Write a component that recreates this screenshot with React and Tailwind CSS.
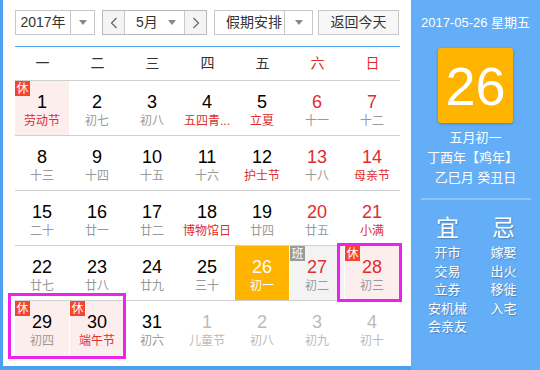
const FONT = { fontFamily: '"Liberation Sans", Arial, "Noto Sans CJK SC", sans-serif' };

const weekdays = [
  { t: "一" }, { t: "二" }, { t: "三" }, { t: "四" }, { t: "五" },
  { t: "六", red: true }, { t: "日", red: true },
];

// d: day, l: lunar, fest: red lunar text, wk: weekend, tag: 休/班, other: next month
const days = [
  { d: 1, l: "劳动节", fest: true, tag: "休" },
  { d: 2, l: "初七" },
  { d: 3, l: "初八" },
  { d: 4, l: "五四青...", fest: true },
  { d: 5, l: "立夏", fest: true },
  { d: 6, l: "十一", wk: true },
  { d: 7, l: "十二", wk: true },
  { d: 8, l: "十三" },
  { d: 9, l: "十四" },
  { d: 10, l: "十五" },
  { d: 11, l: "十六" },
  { d: 12, l: "护士节", fest: true },
  { d: 13, l: "十八", wk: true },
  { d: 14, l: "母亲节", fest: true, wk: true },
  { d: 15, l: "二十" },
  { d: 16, l: "廿一" },
  { d: 17, l: "廿二" },
  { d: 18, l: "博物馆日", fest: true },
  { d: 19, l: "廿四" },
  { d: 20, l: "廿五", wk: true },
  { d: 21, l: "小满", fest: true, wk: true },
  { d: 22, l: "廿七" },
  { d: 23, l: "廿八" },
  { d: 24, l: "廿九" },
  { d: 25, l: "三十" },
  { d: 26, l: "初一", today: true },
  { d: 27, l: "初二", wk: true, tag: "班" },
  { d: 28, l: "初三", wk: true, tag: "休" },
  { d: 29, l: "初四", tag: "休" },
  { d: 30, l: "端午节", fest: true, tag: "休" },
  { d: 31, l: "初六" },
  { d: 1, l: "儿童节", other: true },
  { d: 2, l: "初八", other: true },
  { d: 3, l: "初九", other: true },
  { d: 4, l: "初十", other: true },
];

function Caret() {
  return <span className="w-0 h-0 border-l-[4px] border-r-[4px] border-t-[5px] border-l-transparent border-r-transparent border-t-[#888]" />;
}

function Chevron({ dir }) {
  return (
    <svg width="8" height="12" viewBox="0 0 8 12">
      <path
        d={dir === "left" ? "M6.5 1 L1.5 6 L6.5 11" : "M1.5 1 L6.5 6 L1.5 11"}
        fill="none"
        stroke="#666"
        strokeWidth="1.2"
      />
    </svg>
  );
}

function Cell({ item, last }) {
  let bg = "";
  if (item.today) bg = "bg-[#ffb400]";
  else if (item.tag === "休") bg = "bg-[#fdeeee]";
  else if (item.tag === "班") bg = "bg-[#f3f3f3]";

  let numColor = "text-black";
  let lunarColor = "text-[#999]";
  if (item.wk) numColor = "text-[#e02d2d]";
  if (item.fest) lunarColor = "text-[#e02d2d]";
  if (item.today) {
    numColor = "text-white";
    lunarColor = "text-white";
  }
  if (item.other) {
    numColor = "text-[#bbb]";
    lunarColor = "text-[#bbb]";
  }

  return (
    <div className={`h-[55px] ${last ? "" : "border-b border-[#d0d0d0]"}`}>
      <div className={`relative h-[54px] mr-[1px] flex flex-col items-center pt-[10px] ${bg}`}>
        {item.tag && (
          <span
            className={`absolute left-0 top-0 w-[15px] h-[15px] flex items-center justify-center text-[12px] leading-none text-white ${
              item.tag === "休" ? "bg-[#f3452f]" : "bg-[#9a9a9a]"
            }`}
          >
            {item.tag}
          </span>
        )}
        <span className={`text-[18px] leading-[22px] ${numColor}`}>{item.d}</span>
        <span className={`text-[12px] leading-[16px] whitespace-nowrap ${lunarColor}`}>{item.l}</span>
      </div>
    </div>
  );
}

export default function App() {
  return (
    <div className="relative w-[540px] h-[370px] flex bg-white overflow-hidden" style={FONT}>
      <div className="w-[411px] h-[370px] border-l-[3px] border-b-[4px] border-[#4d9ff0] pl-[12px] pr-[11px] pt-[10px] flex flex-col">
        <div className="flex items-center h-[25px] text-[14px] text-[#333]">
          <div className="w-[80px] h-[25px] border border-[#c8c8c8] flex">
            <div className="flex-1 flex items-center justify-center">2017年</div>
            <div className="w-[24px] border-l border-[#c8c8c8] flex items-center justify-center">
              <Caret />
            </div>
          </div>
          <div className="ml-[7px] w-[105px] h-[25px] border border-[#b8b8b8] flex">
            <div className="w-[22px] bg-[#f4f4f4] border-r border-[#c8c8c8] flex items-center justify-center">
              <Chevron dir="left" />
            </div>
            <div className="flex-1 flex items-center pl-[11px] pr-[8px]">
              <span className="flex-1">5月</span>
              <Caret />
            </div>
            <div className="w-[22px] bg-[#f4f4f4] border-l border-[#c8c8c8] flex items-center justify-center">
              <Chevron dir="right" />
            </div>
          </div>
          <div className="ml-[7px] w-[99px] h-[25px] border border-[#c8c8c8] flex">
            <div className="flex-1 flex items-center pl-[11px]">假期安排</div>
            <div className="w-[28px] border-l border-[#c8c8c8] flex items-center justify-center">
              <Caret />
            </div>
          </div>
          <div className="ml-[5px] w-[81px] h-[25px] border border-[#c8c8c8] bg-[#f7f7f7] flex items-center justify-center">
            返回今天
          </div>
        </div>

        <div className="mt-[11px] h-px bg-[#4ea1f3]" />

        <div className="grid grid-cols-7 h-[34px] border-b border-[#d0d0d0]">
          {weekdays.map((w) => (
            <div
              key={w.t}
              className={`flex items-center justify-center text-[14px] ${w.red ? "text-[#e02d2d]" : "text-[#333]"}`}
            >
              {w.t}
            </div>
          ))}
        </div>

        <div className="grid grid-cols-7">
          {days.map((item, i) => (
            <Cell key={i} item={item} last={i >= 28} />
          ))}
        </div>
      </div>

      <div className="w-[129px] h-[370px] bg-[#63aef7] flex flex-col items-center pt-[14px] text-white">
        <div className="text-[13px] leading-[18px] whitespace-nowrap">2017-05-26 星期五</div>
        <div className="mt-[16px] w-[75px] h-[75px] rounded-[3px] bg-[#ffb400] shadow-[0_1px_3px_rgba(0,0,0,0.25)] flex items-center justify-center text-[54px] leading-none">
          26
        </div>
        <div className="mt-[5px] text-[13px] leading-[20px] text-center">
          <div>五月初一</div>
          <div className="-ml-[6px]">丁酉年【鸡年】</div>
          <div>乙巳月 癸丑日</div>
        </div>
        <div className="mt-[10px] w-[110px] h-[2px] bg-[#8ec5f9]" />
        <div className="mt-[14px] w-[112px] grid grid-cols-2 [text-shadow:1px_1px_1px_rgba(0,0,0,0.25)]">
          <div className="flex flex-col items-center">
            <div className="text-[23px] leading-[28px]">宜</div>
            <div className="mt-[2px] text-[13px] leading-[18.5px] text-center">
              <div>开市</div>
              <div>交易</div>
              <div>立券</div>
              <div>安机械</div>
              <div>会亲友</div>
            </div>
          </div>
          <div className="flex flex-col items-center">
            <div className="text-[23px] leading-[28px]">忌</div>
            <div className="mt-[2px] text-[13px] leading-[18.5px] text-center">
              <div>嫁娶</div>
              <div>出火</div>
              <div>移徙</div>
              <div>入宅</div>
            </div>
          </div>
        </div>
      </div>

      <div className="absolute left-[337px] top-[243px] w-[65px] h-[59px] border-[3px] border-[#ee22ee]" />
      <div className="absolute left-[8px] top-[293px] w-[118px] h-[66px] border-[3px] border-[#ee22ee]" />
    </div>
  );
}
